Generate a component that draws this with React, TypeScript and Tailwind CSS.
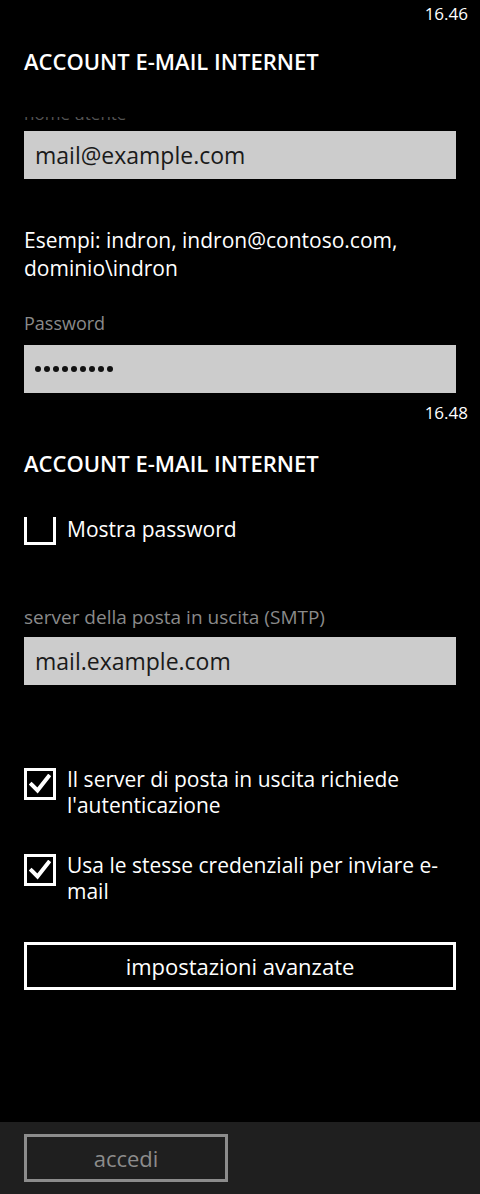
import React from "react";

const font = { fontFamily: '"Open Sans", "Noto Sans", sans-serif' };

const CheckBox: React.FC<{ checked?: boolean }> = ({ checked }) => (
  <div className="w-[32px] h-[32px] border-[3px] border-white shrink-0 flex items-center justify-center">
    {checked && (
      <svg width="22" height="20" viewBox="0 0 22 20" fill="none">
        <path d="M2.5 10.5 L8.5 16.5 L19.5 2.5" stroke="white" strokeWidth="4" strokeLinecap="square" />
      </svg>
    )}
  </div>
);

const Field: React.FC<{ value?: string; dots?: number }> = ({ value, dots }) => (
  <div className="h-[48px] bg-[#cccccc] flex items-center pl-[11px] text-[23px] text-[#1a1a1a]">
    {dots ? (
      <div className="flex gap-[3px]">
        {Array.from({ length: dots }).map((_, i) => (
          <span key={i} className="w-[6px] h-[6px] rounded-full bg-[#111]" />
        ))}
      </div>
    ) : (
      value
    )}
  </div>
);

export default function App() {
  return (
    <div className="w-[480px] h-[1194px] bg-black text-white flex flex-col overflow-hidden" style={font}>
      <div className="flex-1 flex flex-col">
        <div className="h-[30px] flex justify-end items-start pr-[12px] pt-[3px] text-[17px] leading-[22px]">16.46</div>
        <div className="px-6 flex flex-col">
          <div className="mt-[17px] text-[22px] leading-[28px] font-semibold">ACCOUNT E-MAIL INTERNET</div>
          {/* label scrolled away under the header, only its last pixels show */}
          <div className="mt-[42px] h-[3px] overflow-hidden relative">
            <div className="absolute bottom-[-4px] left-0 text-[17px] leading-[20px] text-[#555]">nome utente</div>
          </div>
          <div className="mt-[11px]">
            <Field value="mail@example.com" />
          </div>
          <div className="mt-[47px] text-[21px] leading-[28px]">
            Esempi: indron, indron@contoso.com,
            <br />
            dominio\indron
          </div>
          <div className="mt-[30px] text-[18px] leading-[22px] text-[#8a8a8a]">Password</div>
          <div className="mt-[11px]">
            <Field dots={9} />
          </div>
        </div>
        <div className="h-[30px] flex justify-end items-start pr-[12px] pt-[9px] text-[17px] leading-[22px]">16.48</div>
        <div className="px-6 flex flex-col">
          <div className="mt-[26px] text-[22px] leading-[28px] font-semibold">ACCOUNT E-MAIL INTERNET</div>
          <div className="mt-[40px] flex items-end gap-[11px]">
            <div className="w-[32px] h-[28px] border-[3px] border-t-0 border-white shrink-0" />
            <div className="text-[21px] leading-[28px] relative top-[-2px]">Mostra password</div>
          </div>
          <div className="mt-[61px] text-[19px] leading-[22px] text-[#8a8a8a]">server della posta in uscita (SMTP)</div>
          <div className="mt-[9px]">
            <Field value="mail.example.com" />
          </div>
          <div className="mt-[83px] flex gap-[11px] items-start">
            <CheckBox checked />
            <div className="text-[21px] leading-[26px] mt-[-2px]">
              Il server di posta in uscita richiede
              <br />
              l'autenticazione
            </div>
          </div>
          <div className="mt-[36px] flex gap-[11px] items-start">
            <CheckBox checked />
            <div className="text-[21px] leading-[26px] mt-[-2px]">
              Usa le stesse credenziali per inviare e-
              <br />
              mail
            </div>
          </div>
          <div className="mt-[38px] h-[48px] border-[3px] border-white flex items-center justify-center text-[22px]">
            impostazioni avanzate
          </div>
        </div>
      </div>
      <div className="h-[72px] bg-[#1f1f1f] px-6 pt-[12px]">
        <div className="w-[204px] h-[48px] border-[3px] border-[#8c8c8c] flex items-center justify-center text-[22px] text-[#8c8c8c]">
          accedi
        </div>
      </div>
    </div>
  );
}
